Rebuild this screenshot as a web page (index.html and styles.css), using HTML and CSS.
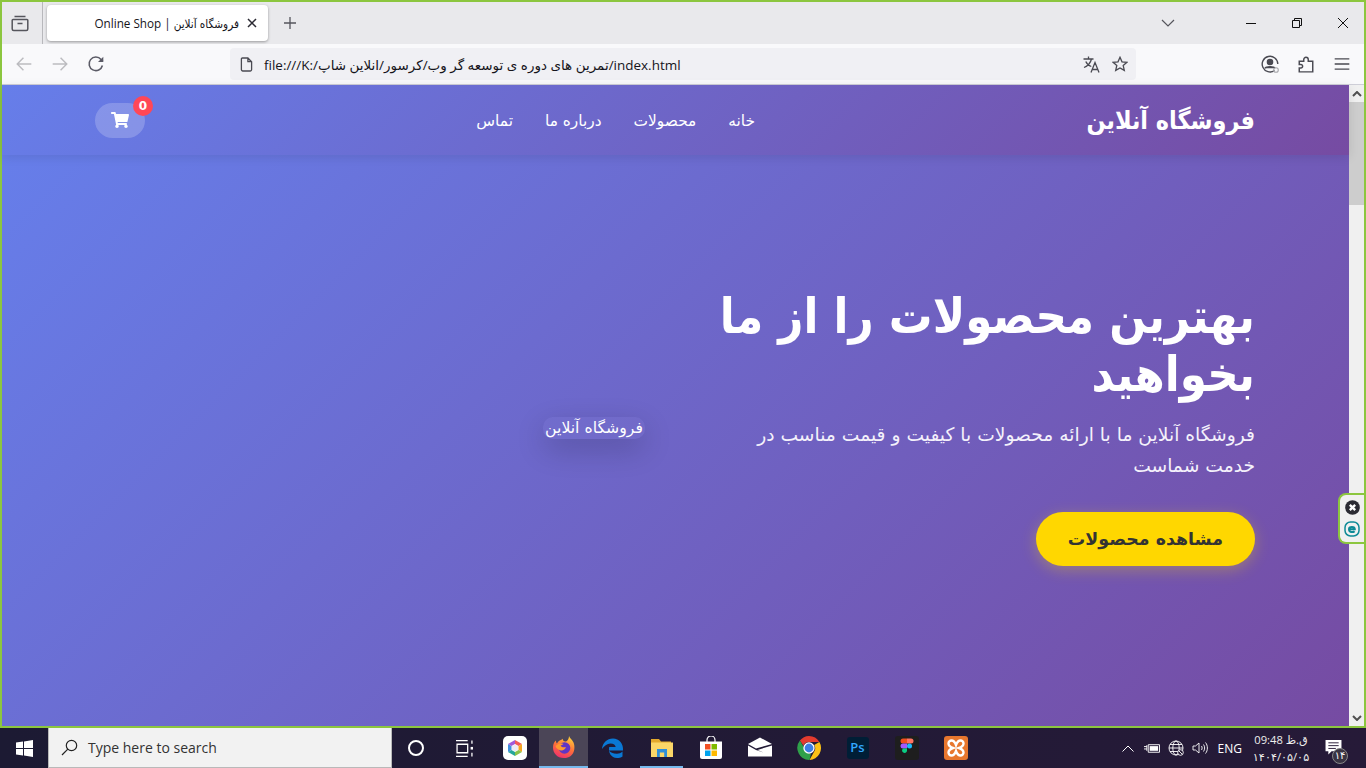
FILE: index.html
```html
<!DOCTYPE html>
<html lang="fa">
<head>
    <meta charset="utf-8">
    <title>فروشگاه آنلاین | Online Shop</title>
    <link rel="stylesheet" href="styles.css">
</head>
<body>
<div class="window">
    <div class="tabstrip">
        <div class="tab-tools">
            <svg class="ico20" viewBox="0 0 20 20" fill="none" stroke="#55555c" stroke-width="1.5"><path d="M4.500 3.500h11M3 6.500h14a.8.8 0 0 1 .8.8V16a1.500 1.500 0 0 1-1.500 1.500H3.700A1.500 1.500 0 0 1 2.200 16V7.300a.8.8 0 0 1 .8-.8zM7.500 10.500h5"/></svg>
        </div>
        <div class="tab">
            <svg class="tab-close" viewBox="0 0 10 10" stroke="#2b2a33" stroke-width="1.500"><path d="M1 1l8 8M9 1l-8 8"/></svg>
            <span class="tab-title">فروشگاه آنلاین | Online Shop</span>
        </div>
        <svg class="tab-new" viewBox="0 0 14 14" stroke="#55555c" stroke-width="1.300"><path d="M7 1v12M1 7h12"/></svg>
        <svg class="tab-list" viewBox="0 0 14 8" fill="none" stroke="#55555c" stroke-width="1.200"><path d="M1 1l6 6 6-6"/></svg>
        <div class="win-btns">
            <svg class="win-btn" viewBox="0 0 12 12" stroke="#111" stroke-width="1"><path d="M1 6.500h10"/></svg>
            <svg class="win-btn" viewBox="0 0 12 12" fill="none" stroke="#111" stroke-width="1"><path d="M1.500 3.500h7v7h-7zM3.500 3.500v-2h7v7h-2"/></svg>
            <svg class="win-btn" viewBox="0 0 12 12" stroke="#111" stroke-width="1"><path d="M1 1l10 10M11 1L1 11"/></svg>
        </div>
    </div>

    <div class="toolbar">
        <div class="tool-group">
            <span class="tool"><svg class="ico18" viewBox="0 0 16 16" fill="none" stroke="#bcbcc0" stroke-width="1.300"><path d="M14.500 8H2M7.500 2.500L2 8l5.500 5.500"/></svg></span>
            <span class="tool"><svg class="ico18" viewBox="0 0 16 16" fill="none" stroke="#bcbcc0" stroke-width="1.300"><path d="M1.500 8H14M8.500 2.500L14 8l-5.500 5.500"/></svg></span>
            <span class="tool"><svg class="ico18" viewBox="0 0 16 16" fill="none" stroke="#5b5b66" stroke-width="1.400"><path d="M13.700 9.300A6 6 0 1 1 12.500 4l1.500 1.500"/><path d="M14.500 1.500v4.700H9.800z" fill="#5b5b66" stroke="none"/></svg></span>
        </div>
        <div class="urlbar">
            <svg class="url-doc" viewBox="0 0 14 16" fill="none" stroke="#4a4a52" stroke-width="1.400"><path d="M2.500 1h6l4 4v8.500a1.500 1.500 0 0 1-1.500 1.500H3A1.500 1.500 0 0 1 1.500 13.500V2A1 1 0 0 1 2.500 1zM8.500 1v4h4"/></svg>
            <span class="url-text">file:///K:/&lrm;انلاین شاپ&lrm;/&lrm;کرسور&lrm;/&lrm;تمرین های دوره ی توسعه گر وب&lrm;/index.html</span>
            <svg class="url-tr" viewBox="0 0 18 17" fill="none" stroke="#4a4a52" stroke-width="1.300"><path d="M.5 3h10M5.500 .5V3M8.500 3C7.500 7 4.500 10 1 11.500M2.800 5.500c1 2.500 3 4.200 5.500 5M8 16.500l4-10 4 10M9.300 13.500h5.400"/></svg>
            <svg class="url-star" viewBox="0 0 16 16" fill="none" stroke="#4a4a52" stroke-width="1.300"><path d="M8 1.300l2 4.500 4.900.5-3.700 3.200 1.100 4.900L8 12l-4.300 2.400 1.100-4.900L1.100 6.300 6 5.800z"/></svg>
        </div>
        <div class="tool-group tool-right">
            <span class="tool"><svg class="ico18" viewBox="0 0 18 18" fill="none" stroke="#4a4a52" stroke-width="1.400"><path d="M13.500 15.500A7.800 7.800 0 1 1 16.800 9"/><circle cx="9" cy="7" r="2.600" fill="#4a4a52"/><path d="M4 13.200c1-2 9-2 10 0" fill="#4a4a52"/><circle cx="15" cy="15" r="2.300" stroke="#a9a9ad" stroke-width="1.100"/></svg></span>
            <span class="tool"><svg class="ico18" viewBox="0 0 16 16" fill="none" stroke="#4a4a52" stroke-width="1.300"><path d="M6.500 15H2v-3.500h1.500a1.500 1.500 0 0 0 0-3H2V5.500h4V4a2 2 0 0 1 4 0v1.500h4V15z"/></svg></span>
            <span class="tool"><svg class="ico18" viewBox="0 0 16 16" stroke="#4a4a52" stroke-width="1.200"><path d="M1.500 3.500h13M1.500 8h13M1.500 12.500h13"/></svg></span>
        </div>
    </div>

    <div class="viewport">
        <div class="page" dir="rtl">
            <header class="site-header">
                <div class="container header-row">
                    <div class="logo">فروشگاه آنلاین</div>
                    <nav class="nav">
                        <a href="#">خانه</a>
                        <a href="#">محصولات</a>
                        <a href="#">درباره ما</a>
                        <a href="#">تماس</a>
                    </nav>
                    <div class="cart">
                        <svg class="cart-ico" viewBox="0 0 576 512" fill="#fff"><path d="M528.120 301.319l47.273-208C578.806 78.301 567.391 64 551.990 64H159.208l-9.166-44.810C147.758 8.021 137.930 0 126.529 0H24C10.745 0 0 10.745 0 24v16c0 13.255 10.745 24 24 24h69.883l70.248 343.435C147.325 417.100 136 435.222 136 456c0 30.928 25.072 56 56 56s56-25.072 56-56c0-15.674-6.447-29.835-16.824-40h209.647C430.447 426.165 424 440.326 424 456c0 30.928 25.072 56 56 56s56-25.072 56-56c0-22.172-12.888-41.332-31.579-50.405l5.517-24.276c3.413-15.018-8.002-29.319-23.403-29.319H218.117l-6.545-32h293.145c11.206 0 20.920-7.754 23.403-18.681z"/></svg>
                        <span class="badge">0</span>
                    </div>
                </div>
            </header>
            <section class="hero">
                <div class="container hero-grid">
                    <div class="hero-text">
                        <h1>بهترین محصولات را از ما بخواهید</h1>
                        <p>فروشگاه آنلاین ما با ارائه محصولات با کیفیت و قیمت مناسب در خدمت شماست</p>
                        <a class="hero-btn" href="#">مشاهده محصولات</a>
                    </div>
                    <div class="hero-pic">
                        <span class="pic-alt">فروشگاه آنلاین</span>
                    </div>
                </div>
            </section>
        </div>
        <div class="scrollbar">
            <span class="sb-arrow"><svg viewBox="0 0 10 6" fill="none" stroke="#505050" stroke-width="2"><path d="M1 5l4-4 4 4"/></svg></span>
            <span class="sb-thumb"></span>
            <span class="sb-arrow sb-down"><svg viewBox="0 0 10 6" fill="none" stroke="#505050" stroke-width="2"><path d="M1 1l4 4 4-4"/></svg></span>
        </div>
        <div class="eset">
            <svg class="eset-x" viewBox="0 0 14 14"><circle cx="7" cy="7" r="6.800" fill="#2b2b33"/><path d="M4.500 4.500l5 5M9.500 4.500l-5 5" stroke="#fff" stroke-width="2.200"/></svg>
            <svg class="eset-e" viewBox="0 0 16 16" fill="none"><rect x="1" y="1" width="14" height="14" rx="5.500" stroke="#0e8a96" stroke-width="1.500"/><path d="M5 8.200h5.800C10.800 5.300 5 5 5 8.200s4 3.500 5.600 2" stroke="#0e8a96" stroke-width="2"/></svg>
        </div>
    </div>
</div>

<div class="taskbar">
    <div class="start"><svg class="ico17" viewBox="0 0 17 17" fill="#fff"><path d="M0 2.600l7-1v6.400H0zM8 1.400L17 0v8H8zM0 9h7v6.400l-7-1zM8 9h9v8l-9-1.400z"/></svg></div>
    <div class="search">
        <svg class="ico17" viewBox="0 0 17 17" fill="none" stroke="#222" stroke-width="1.200"><circle cx="10.500" cy="6.500" r="5.200"/><path d="M6.800 10.200L1 16"/></svg>
        <span>Type here to search</span>
    </div>
    <div class="tb-cell"><span class="cortana"></span></div>
    <div class="tb-cell"><svg class="ico17" viewBox="0 0 16 16" fill="none" stroke="#fff" stroke-width="1.200"><path d="M0 .6h11M0 15.400h11M1 4h10v8H1zM15 .5v3M15 12v3.500"/><path d="M15 6.500v2.500" stroke-width="2.500"/></svg></div>
    <div class="tb-apps">
        <div class="tb-app"><svg class="ico24" viewBox="0 0 24 24"><rect width="24" height="24" rx="5" fill="#fff"/><path d="M12 4l7 4-3.500 2L12 8z" fill="#f25a5a"/><path d="M19 8v8l-3.500-2v-4z" fill="#f5a623"/><path d="M19 16l-7 4v-4l3.500-2z" fill="#8bc34a"/><path d="M12 20l-7-4 3.500-2 3.500 2z" fill="#26a69a"/><path d="M5 16V8l3.500 2v4z" fill="#3f8fe0"/><path d="M5 8l7-4v4l-3.500 2z" fill="#a259d9"/><path d="M12 8.500l3 1.750v3.500l-3 1.750-3-1.750v-3.500z" fill="#eceaf5"/></svg></div>
        <div class="tb-app tb-active"><svg class="ico24" viewBox="0 0 24 24"><defs><linearGradient id="ffa" x1="0.700" y1="0" x2="0.300" y2="1"><stop offset="0" stop-color="#ffd23a"/><stop offset="0.500" stop-color="#ff7139"/><stop offset="1" stop-color="#ef2f6e"/></linearGradient></defs><path d="M17 1c1 2.500 3 3.500 4.500 6.500C23.500 12 23 23 12 23 5 23 1 18 1 12.500 1 9 2.500 6.500 4 5.500c0 1.500.3 2.500 1 3C6 6 9 5 11 3.800 10.500 5 11 6 13 6.500 15 7 17 4 17 1z" fill="url(#ffa)"/><circle cx="12.500" cy="13" r="5.800" fill="#5f35c4"/><path d="M3.500 11c2-2 5-3 8-2 -1 .8-2 1.200-3 1.400 1 1.800 3.200 2.400 5.500 1.600-1 3-3.500 4-6 3.200C5.500 14.500 4 13 3.500 11z" fill="#ff9a2e"/></svg></div>
        <div class="tb-app"><svg class="ico24" viewBox="0 0 24 24"><path d="M8 14.500h14c.6-7-3.800-12-10-12C6 2.500 1.500 7 1 13c2-3 5-5.500 8.500-5.500 3.200 0 5 1.700 5.200 3.500H8.200C7 16 10 22 16 22c2 0 4-.5 5.500-1.500v-5c-1.500 1.500-3.500 2.200-5.500 2.200-4 0-7-1.200-8-3.200z" fill="#0a78d4"/></svg></div>
        <div class="tb-app tb-open"><svg class="ico24" viewBox="0 0 24 24"><path d="M1 3h8l2 2.500h10v3H1z" fill="#e3a92c"/><path d="M1 6.500h22V21H1z" fill="#fbd768"/><path d="M7 13h10v8h-2.800v-4.500H9.800V21H7z" fill="#2f8fd8"/></svg></div>
        <div class="tb-app"><svg class="ico24" viewBox="0 0 24 24"><path d="M8 6V4a4 4 0 0 1 8 0v2" fill="none" stroke="#fff" stroke-width="1.200"/><path d="M1 5.500h22V21a2 2 0 0 1-2 2H3a2 2 0 0 1-2-2z" fill="#fff"/><path d="M6 8h5.500v5.500H6z" fill="#f25022"/><path d="M12.500 8H18v5.500h-5.500z" fill="#7fba00"/><path d="M6 14.500h5.500V20H6z" fill="#00a4ef"/><path d="M12.500 14.500H18V20h-5.500z" fill="#ffb900"/></svg></div>
        <div class="tb-app"><svg class="ico24" viewBox="0 0 24 24" fill="#fff"><path d="M0 8L12 1.500 24 8 8 12.500z"/><path d="M0 9.500V20.500h24V9.500L9.500 14l6 2.500-7.500-2.500z"/></svg></div>
        <div class="tb-app"><svg class="ico24" viewBox="0 0 24 24"><path d="M12 0a12 12 0 0 1 10.400 6H12a6 6 0 0 0-5.600 3.700L2.900 4.600A12 12 0 0 1 12 0z" fill="#e33b2e"/><path d="M22.400 6A12 12 0 0 1 12.500 24l4.700-8.500A6 6 0 0 0 17.200 9L22.400 6z" fill="#fbc116"/><path d="M2.900 4.600l5.300 9.100A6 6 0 0 0 14 17.700L12.500 24A12 12 0 0 1 2.900 4.600z" fill="#2fa04a"/><circle cx="12" cy="12" r="5.700" fill="#fff"/><circle cx="12" cy="12" r="4.400" fill="#3d7fe6"/></svg></div>
        <div class="tb-app"><div class="ps-logo">Ps</div></div>
        <div class="tb-app"><svg class="ico24" viewBox="0 0 24 24"><rect width="24" height="24" rx="3" fill="#1e1e1e"/><path d="M8 2.500h4v5H8a2.500 2.500 0 0 1 0-5z" fill="#f24e1e"/><path d="M12 2.500h4a2.500 2.500 0 0 1 0 5h-4z" fill="#ff7262"/><path d="M8 7.500h4v5H8a2.500 2.500 0 0 1 0-5z" fill="#a259ff"/><circle cx="14.500" cy="10" r="2.500" fill="#1abcfe"/><path d="M8 12.500h4V15a2.500 2.500 0 1 1-4-2.500z" fill="#0acf83"/></svg></div>
        <div class="tb-app"><svg class="ico24" viewBox="0 0 24 24"><rect width="24" height="24" rx="3" fill="#e8772e"/><path d="M7.500 4.500a3 3 0 0 0-3 3c0 1.800 1.800 3.500 4.500 4.500-2.700 1-4.500 2.700-4.500 4.500a3 3 0 0 0 3 3c1.800 0 3.500-1.800 4.500-4.500 1 2.700 2.700 4.500 4.500 4.500a3 3 0 0 0 3-3c0-1.800-1.800-3.500-4.500-4.500 2.700-1 4.500-2.700 4.500-4.500a3 3 0 0 0-3-3c-1.800 0-3.500 1.800-4.500 4.500-1-2.700-2.700-4.500-4.500-4.500z" fill="none" stroke="#fff" stroke-width="2.400"/></svg></div>
    </div>
    <div class="tray">
        <svg class="tray-chev" viewBox="0 0 12 7" fill="none" stroke="#fff" stroke-width="1"><path d="M.5 6.500L6 1l5.500 5.500"/></svg>
        <svg class="tray-batt" viewBox="0 0 17 12" fill="none" stroke="#fff" stroke-width="1"><path d="M4.500 2.500h12v8h-12z"/><path d="M6 4h9v5H6z" fill="#fff" stroke="none"/><path d="M0 4.500h3M0 7h3M3 3v6"/></svg>
        <svg class="tray-globe" viewBox="0 0 16 16" fill="none" stroke="#fff" stroke-width=".9"><circle cx="8" cy="8" r="7"/><ellipse cx="8" cy="8" rx="3.200" ry="7"/><path d="M1 8h14M2 4.500h12M2 11.500h12"/><circle cx="12.500" cy="12.500" r="2.800" fill="#251a35"/><path d="M10.800 10.800l3.400 3.400"/></svg>
        <svg class="tray-vol" viewBox="0 0 17 14" fill="none" stroke="#fff" stroke-width=".9"><path d="M1 5h2.500L7 2v10L3.500 9H1zM9.500 5c.8 1.200.8 2.800 0 4M11.500 3.500c1.500 2 1.500 5 0 7M13.500 1.500c2.500 3 2.500 8 0 11"/></svg>
        <span class="tray-lang">ENG</span>
        <div class="clock">
            <span>ق.ظ 09:48</span>
            <span>۱۴۰۴/۰۵/۰۵</span>
        </div>
        <div class="notif">
            <svg class="notif-ico" viewBox="0 0 17 16" fill="#fff"><path d="M0 0h17v12H6.500L3 15.500V12H0z"/><path d="M3 3h11M3 6h11M3 9h8" stroke="#251a35" stroke-width="1"/></svg>
            <span class="notif-count">۱۴</span>
        </div>
    </div>
</div>
</body>
</html>
```
FILE: styles.css
```css
* { box-sizing: border-box; }
html, body { margin: 0; height: 100%; overflow: hidden; }
body { font-family: "Open Sans", "DejaVu Sans", sans-serif; background: #1f1a30; }
a { text-decoration: none; color: inherit; }
svg { display: block; flex: none; }

.ico17 { width: 17px; height: 17px; }
.ico18 { width: 18px; height: 18px; }
.ico20 { width: 20px; height: 20px; }
.ico24 { width: 24px; height: 24px; }

/* browser window */
.window { height: 728px; border: 2px solid #8cc63f; display: flex; flex-direction: column; background: #e9e9ec; }

.tabstrip { height: 42px; display: flex; align-items: center; flex: none; }
.tab-tools { width: 41px; height: 42px; border-right: 1px solid #b8b8bc; display: flex; align-items: center; justify-content: center; padding-right: 4px; }
.tab { width: 221px; height: 36px; margin-left: 4px; background: #fff; border-radius: 4px; box-shadow: 0 1px 3px rgba(0,0,0,0.35); display: flex; flex-direction: row-reverse; align-items: center; padding: 0 11px 0 0; }
.tab-close { width: 10px; height: 10px; margin-left: 8px; }
.tab-title { font-family: "Open Sans", "DejaVu Sans Condensed", "DejaVu Sans", sans-serif; font-size: 11.700px; color: #15141a; direction: rtl; white-space: nowrap; }
.tab-new { width: 14px; height: 14px; margin-left: 15px; }
.tab-list { width: 14px; height: 8px; margin-left: 864px; }
.win-btns { margin-left: auto; display: flex; }
.win-btn { width: 12px; height: 12px; margin-right: 34px; }
.win-btn:last-child { margin-right: 15px; }

.toolbar { height: 41px; flex: none; background: #f9f9fb; border-bottom: 1px solid #cfcfd8; display: flex; align-items: center; }
.tool-group { display: flex; padding-left: 4px; }
.tool-right { margin-left: auto; padding: 0 4px 0 0; }
.tool { width: 36px; height: 32px; display: flex; align-items: center; justify-content: center; }
.urlbar { width: 906px; height: 32px; margin-left: 116px; background: #f0f0f4; border-radius: 4px; display: flex; align-items: center; padding: 0 8px 0 10px; }
.url-doc { width: 13px; height: 15px; }
.url-text { margin-left: 11px; padding-top: 1px; font-size: 13.470px; color: #15141a; white-space: nowrap; direction: ltr; }
.url-tr { width: 18px; height: 17px; margin-left: auto; }
.url-star { width: 16px; height: 16px; margin-left: 11px; }

/* page area */
.viewport { flex: 1; display: flex; min-height: 0; position: relative; }
.page { flex: 1; min-width: 0; display: flex; flex-direction: column; color: #fff; font-family: "DejaVu Sans", sans-serif; }
.container { width: 1200px; margin: 0 74px 0 73px; padding: 0 20px; }

.site-header { height: 70px; flex: none; background: linear-gradient(135deg, #667eea 0%, #764ba2 100%); box-shadow: 0 2px 10px rgba(0,0,0,0.1); position: relative; }
.header-row { height: 100%; display: flex; align-items: center; justify-content: space-between; }
.logo { font-family: "DejaVu Sans Condensed", "DejaVu Sans", sans-serif; font-size: 24.900px; font-weight: bold; }
.nav { display: flex; gap: 32px; font-size: 15.400px; padding-top: 1px; }
.cart { width: 50px; height: 35px; background: rgba(255,255,255,0.2); border-radius: 25px; display: flex; align-items: center; justify-content: center; position: relative; }
.cart-ico { width: 18px; height: 16px; }
.badge { position: absolute; top: -7px; left: 38px; width: 20px; height: 20px; border-radius: 50%; background: #ff4757; font-size: 12px; font-weight: bold; display: flex; align-items: center; justify-content: center; }

.hero { flex: 1; background: linear-gradient(135deg, #667eea 0%, #764ba2 100%); display: flex; align-items: center; padding-bottom: 24px; }
.hero-grid { display: grid; grid-template-columns: 1fr 1fr; gap: 60px; align-items: center; }
.hero-text h1 { margin: -3px 0 17px; font-family: "DejaVu Sans Condensed", "DejaVu Sans", sans-serif; font-size: 48.500px; line-height: 57.600px; font-weight: bold; }
.hero-text p { margin: 0 0 30px; font-size: 18.700px; line-height: 30.700px; color: #f4f1fb; }
.hero-btn { display: inline-block; height: 54px; line-height: 54px; padding: 0 32px; background: #ffd700; color: #333; border-radius: 27px; font-size: 17.400px; font-weight: bold; box-shadow: 0 4px 15px rgba(255,215,0,0.3); }
.hero-pic { display: flex; align-items: center; padding-bottom: 2px; }
.pic-alt { font-size: 15.700px; line-height: 22px; padding: 0 2px; border-radius: 10px; background: rgba(255,255,255,0.03); box-shadow: 0 10px 30px rgba(0,0,0,0.2); }

.scrollbar { width: 15px; flex: none; background: #f0f0f0; display: flex; flex-direction: column; }
.sb-arrow { height: 17px; display: flex; align-items: center; justify-content: center; }
.sb-arrow svg { width: 10px; height: 6px; }
.sb-thumb { height: 103px; background: #cdcdcd; }
.sb-down { margin-top: auto; }

.eset { position: absolute; right: 0; top: 408px; width: 26px; height: 51px; background: #f0f0f0; border: 2px solid #8cc63f; border-right: 0; border-radius: 8px 0 0 8px; display: flex; flex-direction: column; align-items: center; gap: 6px; padding-top: 5px; }
.eset-x { width: 15px; height: 15px; }
.eset-e { width: 16px; height: 16px; }

/* windows taskbar */
.taskbar { height: 40px; display: flex; align-items: stretch; background: linear-gradient(90deg, #1c1a33 0%, #261a38 100%); color: #fff; }
.start { width: 48px; display: flex; align-items: center; justify-content: center; }
.search { width: 344px; background: #f2f2f2; border: 1px solid #b9b9b9; border-top: 0; display: flex; align-items: center; gap: 10px; padding-left: 12px; color: #333; font-size: 14px; }
.tb-cell { width: 48px; display: flex; align-items: center; justify-content: center; }
.cortana { width: 16px; height: 16px; border: 2.500px solid #fff; border-radius: 50%; }
.tb-apps { display: flex; margin-left: 2px; }
.tb-app { width: 49px; display: flex; align-items: center; justify-content: center; position: relative; }
.tb-active { background: #4b4557; border-bottom: 2px solid #76b9ed; }
.tb-open::after { content: ""; position: absolute; left: 3px; right: 3px; bottom: 0; height: 2px; background: #76b9ed; }
.ps-logo { width: 22px; height: 22px; border-radius: 3px; background: #001e36; color: #31a8ff; font-family: "Open Sans", sans-serif; font-size: 13px; font-weight: 600; text-align: center; line-height: 21px; }

.tray { margin-left: auto; display: flex; align-items: center; padding-right: 14px; }
.tray-chev { width: 12px; height: 7px; margin-right: 10px; }
.tray-batt { width: 16px; height: 12px; margin-right: 8px; }
.tray-globe { width: 16px; height: 16px; margin-right: 8px; }
.tray-vol { width: 17px; height: 14px; margin-right: 9px; }
.tray-lang { font-size: 12px; margin-right: 6px; }
.clock { width: 66px; margin-right: 4px; display: flex; flex-direction: column; align-items: center; font-size: 11.200px; line-height: 17px; color: #eee; }
.notif { width: 34px; height: 40px; position: relative; padding: 12px 0 0 7px; }
.notif-ico { width: 17px; height: 15px; }
.notif-count { position: absolute; left: 14px; top: 20px; width: 16px; height: 16px; border-radius: 50%; background: #3a3443; border: 1px solid #888; font-size: 10px; line-height: 13px; text-align: center; }
```
